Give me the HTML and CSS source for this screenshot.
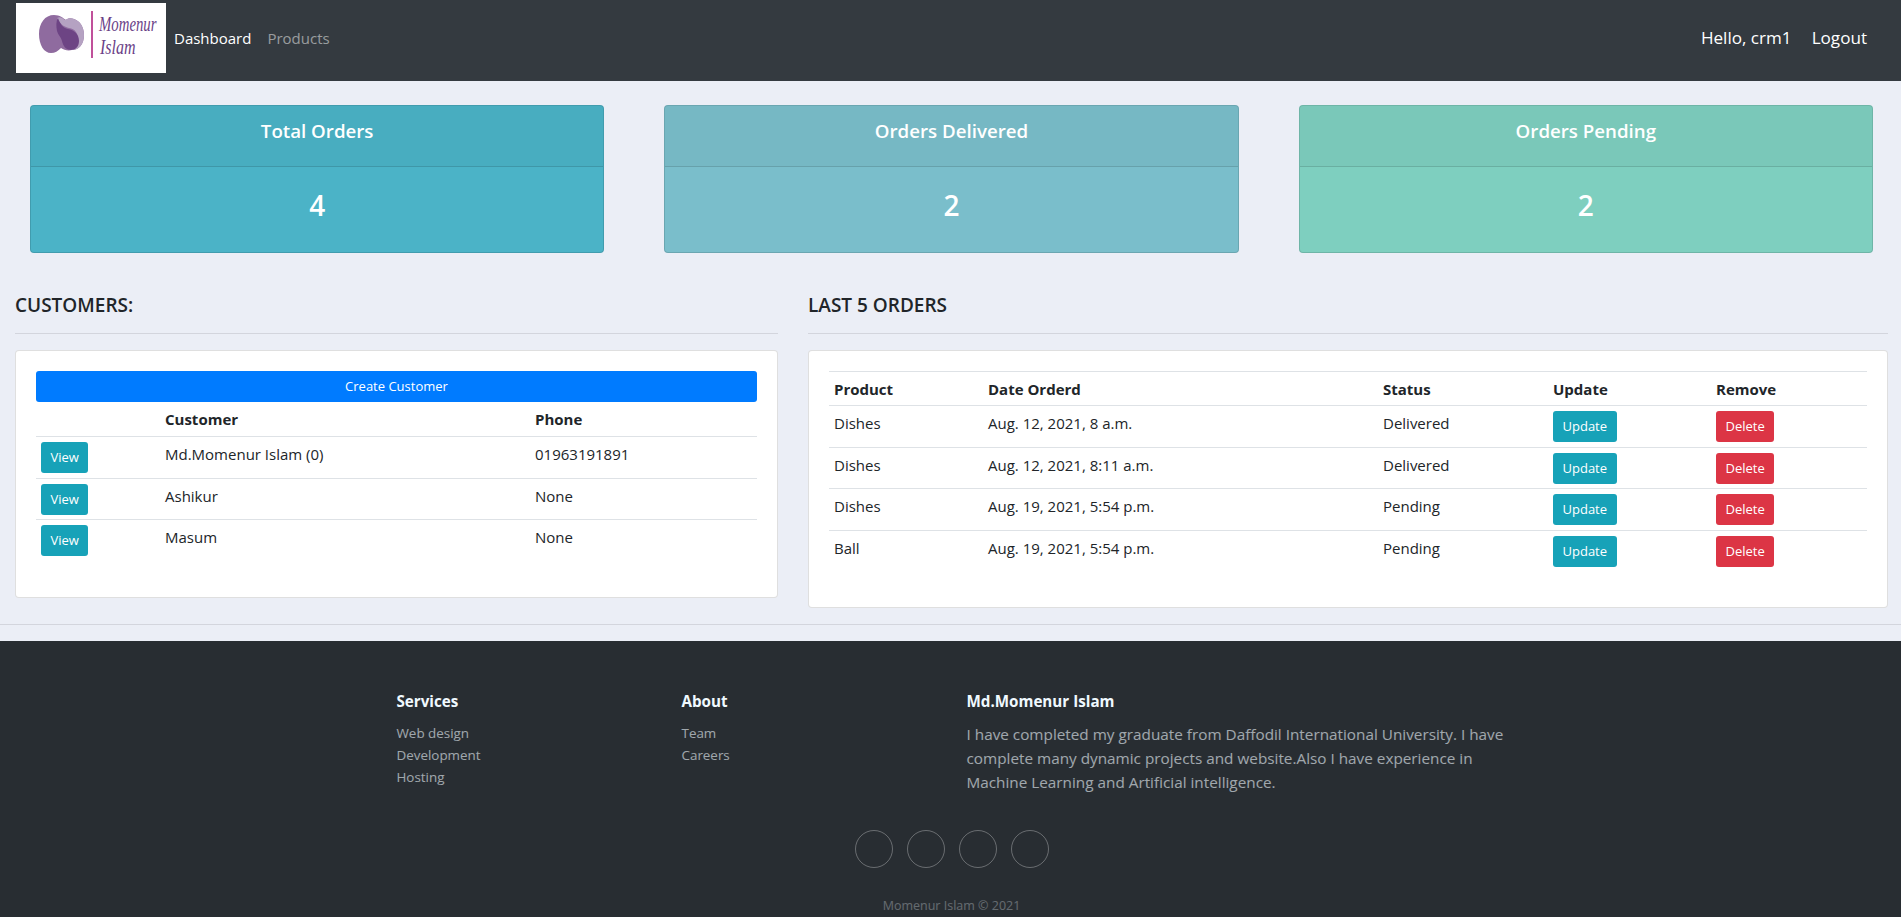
FILE: index.html
```html
<!DOCTYPE html>
<html lang="en">
<head>
    <meta charset="UTF-8">
    <meta name="viewport" content="width=device-width, initial-scale=1.0">
    <title>CRM Dashboard</title>
    <link rel="stylesheet" href="styles.css">
</head>
<body>
    <nav class="navbar">
        <svg class="logo" viewBox="0 0 150 70" width="150" height="70">
            <rect width="150" height="70" fill="#fff"/>
            <g transform="translate(-16 -3)">
                <path d="M39 34c0-11 6-19 15-19 6 0 9 3 12 5 2-2 5-2 8-1 6 2 10 8 10 16 0 9-5 15-12 15-4 1-8 0-11-2-3 3-6 5-10 5-7 0-12-8-12-19z" fill="#8f6b9f"/>
                <path d="M57 18c4-2 6 1 8 2 3-2 6-2 9-1 6 2 10 8 10 16 0 9-5 15-12 15-1 0-2 0-3-1 5 0 9-2 9-10 0-6-3-10-9-11-5-1-9-4-12-10z" fill="#b5a2c2"/>
                <path d="M58 18c2 6 5 10 10 11 6 1 11 5 11 12 0 6-4 9-8 9-5 0-8-4-9-9-1-4-4-6-5-10-1-5-1-10 1-13z" fill="#6d4484"/>
                <rect x="91" y="11" width="2" height="47" fill="#c0509a"/>
                <text class="logo-text" transform="translate(99 31) scale(0.74 1)">Momenur</text>
                <text class="logo-text" transform="translate(100 54) scale(0.8 1)">Islam</text>
            </g>
        </svg>
        <a class="nav-link active" href="#">Dashboard</a>
        <a class="nav-link" href="#">Products</a>
        <div class="nav-right">
            <span class="nav-user">Hello, crm1</span>
            <a class="nav-user" href="#">Logout</a>
        </div>
    </nav>

    <div class="stats">
        <div class="stat-card stat-total">
            <div class="stat-head">Total Orders</div>
            <div class="stat-body">4</div>
        </div>
        <div class="stat-card stat-delivered">
            <div class="stat-head">Orders Delivered</div>
            <div class="stat-body">2</div>
        </div>
        <div class="stat-card stat-pending">
            <div class="stat-head">Orders Pending</div>
            <div class="stat-body">2</div>
        </div>
    </div>

    <div class="panels">
        <section>
            <h5 class="panel-title">CUSTOMERS:</h5>
            <hr class="panel-rule">
            <div class="panel">
                <a class="btn-create" href="#">Create Customer</a>
                <table class="customers">
                    <colgroup>
                        <col class="c-view"><col class="c-name"><col>
                    </colgroup>
                    <tr>
                        <th></th>
                        <th>Customer</th>
                        <th>Phone</th>
                    </tr>
                    <tr>
                        <td><a class="btn btn-info" href="#">View</a></td>
                        <td>Md.Momenur Islam (0)</td>
                        <td>01963191891</td>
                    </tr>
                    <tr>
                        <td><a class="btn btn-info" href="#">View</a></td>
                        <td>Ashikur</td>
                        <td>None</td>
                    </tr>
                    <tr>
                        <td><a class="btn btn-info" href="#">View</a></td>
                        <td>Masum</td>
                        <td>None</td>
                    </tr>
                </table>
            </div>
        </section>

        <section>
            <h5 class="panel-title">LAST 5 ORDERS</h5>
            <hr class="panel-rule">
            <div class="panel">
                <table class="orders">
                    <colgroup>
                        <col class="c-product"><col class="c-date"><col class="c-status"><col class="c-update"><col>
                    </colgroup>
                    <tr>
                        <th>Product</th>
                        <th>Date Orderd</th>
                        <th>Status</th>
                        <th>Update</th>
                        <th>Remove</th>
                    </tr>
                    <tr>
                        <td>Dishes</td>
                        <td>Aug. 12, 2021, 8 a.m.</td>
                        <td>Delivered</td>
                        <td><a class="btn btn-info" href="#">Update</a></td>
                        <td><a class="btn btn-danger" href="#">Delete</a></td>
                    </tr>
                    <tr>
                        <td>Dishes</td>
                        <td>Aug. 12, 2021, 8:11 a.m.</td>
                        <td>Delivered</td>
                        <td><a class="btn btn-info" href="#">Update</a></td>
                        <td><a class="btn btn-danger" href="#">Delete</a></td>
                    </tr>
                    <tr>
                        <td>Dishes</td>
                        <td>Aug. 19, 2021, 5:54 p.m.</td>
                        <td>Pending</td>
                        <td><a class="btn btn-info" href="#">Update</a></td>
                        <td><a class="btn btn-danger" href="#">Delete</a></td>
                    </tr>
                    <tr>
                        <td>Ball</td>
                        <td>Aug. 19, 2021, 5:54 p.m.</td>
                        <td>Pending</td>
                        <td><a class="btn btn-info" href="#">Update</a></td>
                        <td><a class="btn btn-danger" href="#">Delete</a></td>
                    </tr>
                </table>
            </div>
        </section>
    </div>

    <hr class="page-rule">

    <footer class="footer">
        <div class="footer-inner">
            <div class="footer-cols">
                <div>
                    <h3>Services</h3>
                    <ul>
                        <li><a href="#">Web design</a></li>
                        <li><a href="#">Development</a></li>
                        <li><a href="#">Hosting</a></li>
                    </ul>
                </div>
                <div>
                    <h3>About</h3>
                    <ul>
                        <li><a href="#">Team</a></li>
                        <li><a href="#">Careers</a></li>
                    </ul>
                </div>
                <div>
                    <h3>Md.Momenur Islam</h3>
                    <p>I have completed my graduate from Daffodil International University. I have complete many dynamic projects and website.Also I have experience in Machine Learning and Artificial intelligence.</p>
                </div>
            </div>
            <div class="social">
                <a href="#"></a>
                <a href="#"></a>
                <a href="#"></a>
                <a href="#"></a>
            </div>
            <p class="copyright">Momenur Islam © 2021</p>
        </div>
    </footer>
</body>
</html>
```

FILE: styles.css
```css
body {
    margin: 0;
    font-family: "Open Sans", "Noto Sans", Arial, sans-serif;
    font-size: 15px;
    line-height: 24px;
    color: #212529;
    background-color: #ebeef6;
}

a {
    text-decoration: none;
}

/* navbar */
.navbar {
    display: flex;
    align-items: center;
    height: 81px;
    padding: 3px 34px 8px 16px;
    box-sizing: border-box;
    background: #343a40;
}

.logo {
    flex: none;
    margin-right: 8px;
}

.logo-text {
    font-family: "Liberation Serif", serif;
    font-style: italic;
    font-size: 20px;
    fill: #6a3f87;
}

.nav-link {
    margin-right: 16px;
    font-size: 15px;
    color: rgba(255, 255, 255, 0.5);
}

.nav-link.active {
    color: #fff;
}

.nav-right {
    display: flex;
    gap: 20px;
    margin-left: auto;
}

.nav-user {
    font-size: 17.1px;
    color: #fff;
}

/* top cards */
.stats {
    display: grid;
    grid-template-columns: repeat(3, 1fr);
    gap: 60px;
    padding: 24px 28px 41px 30px;
}

.stat-card {
    height: 148px;
    box-sizing: border-box;
    border: 1px solid rgba(0, 0, 0, 0.125);
    border-radius: 4px;
    color: #fff;
    text-align: center;
    overflow: hidden;
}

.stat-total {
    background: #4bb3c7;
}

.stat-delivered {
    background: #7abecb;
}

.stat-pending {
    background: #7ecfbf;
}

.stat-head {
    height: 61px;
    box-sizing: border-box;
    padding-top: 13px;
    font-size: 18.7px;
    font-weight: 600;
    background: rgba(0, 0, 0, 0.03);
    border-bottom: 1px solid rgba(0, 0, 0, 0.125);
}

.stat-body {
    padding-top: 21px;
    font-size: 28px;
    line-height: 34px;
    font-weight: 600;
}

/* customers and orders */
.panels {
    display: grid;
    grid-template-columns: 763px 1fr;
    gap: 30px;
    align-items: start;
    padding: 0 13px 0 15px;
}

.panel-title {
    margin: 0;
    font-size: 19px;
    line-height: 22px;
    font-weight: 600;
}

.panel-rule {
    margin: 17px 0 16px;
    border: 0;
    border-top: 1px solid rgba(0, 0, 0, 0.1);
}

.panel {
    padding: 20px;
    background: #fff;
    border: 1px solid rgba(0, 0, 0, 0.125);
    border-radius: 4px;
}

.btn-create {
    display: block;
    height: 31px;
    font-size: 13px;
    line-height: 31px;
    color: #fff;
    text-align: center;
    background: #007bff;
    border-radius: 3px;
}

table {
    width: 100%;
    margin-bottom: 16px;
    border-collapse: collapse;
    table-layout: fixed;
}

th, td {
    padding: 5px 5px 4.4px;
    text-align: left;
    vertical-align: top;
    border-top: 1px solid #dee2e6;
}

th {
    font-weight: 700;
    font-size: 15px;
}

.customers th {
    border-top: 0;
    padding: 5px 5px 5.4px;
}

.c-view { width: 124px; }
.c-name { width: 370px; }

.c-product { width: 154px; }
.c-date { width: 395px; }
.c-status { width: 170px; }
.c-update { width: 163px; }

.btn {
    display: block;
    width: fit-content;
    padding: 0 9.5px;
    font-size: 13px;
    line-height: 31px;
    color: #fff;
    border-radius: 3px;
}

.btn-info {
    background: #17a2b8;
}

.btn-danger {
    background: #dc3545;
}

.page-rule {
    margin: 16px 0;
    border: 0;
    border-top: 1px solid rgba(0, 0, 0, 0.1);
}

/* footer */
.footer {
    height: 276px;
    box-sizing: border-box;
    padding-top: 48px;
    color: #f0f9ff;
    background: #282d32;
}

.footer-inner {
    max-width: 1140px;
    margin: 0 auto;
}

.footer-cols {
    display: grid;
    grid-template-columns: 285px 285px 570px;
    height: 107px;
    padding-left: 1px;
}

.footer-cols > div {
    padding: 0 15px;
}

.footer h3 {
    margin: 0 0 9px;
    font-size: 15.2px;
    line-height: 24px;
    font-weight: 700;
}

.footer ul {
    margin: 0;
    padding: 0;
    list-style: none;
    font-size: 13.4px;
    line-height: 22px;
}

.footer ul a {
    color: inherit;
    opacity: 0.6;
}

.footer-cols p {
    margin: 0;
    font-size: 15.3px;
    opacity: 0.6;
}

.social {
    display: flex;
    justify-content: center;
    gap: 14px;
    padding-left: 3px;
    margin-top: 34px;
}

.social a {
    width: 38px;
    height: 38px;
    box-sizing: border-box;
    border: 1px solid rgba(255, 255, 255, 0.3);
    border-radius: 50%;
}

.copyright {
    margin: 29px 0 0;
    padding-left: 2px;
    font-size: 12.5px;
    line-height: 18px;
    text-align: center;
    opacity: 0.3;
}
```
